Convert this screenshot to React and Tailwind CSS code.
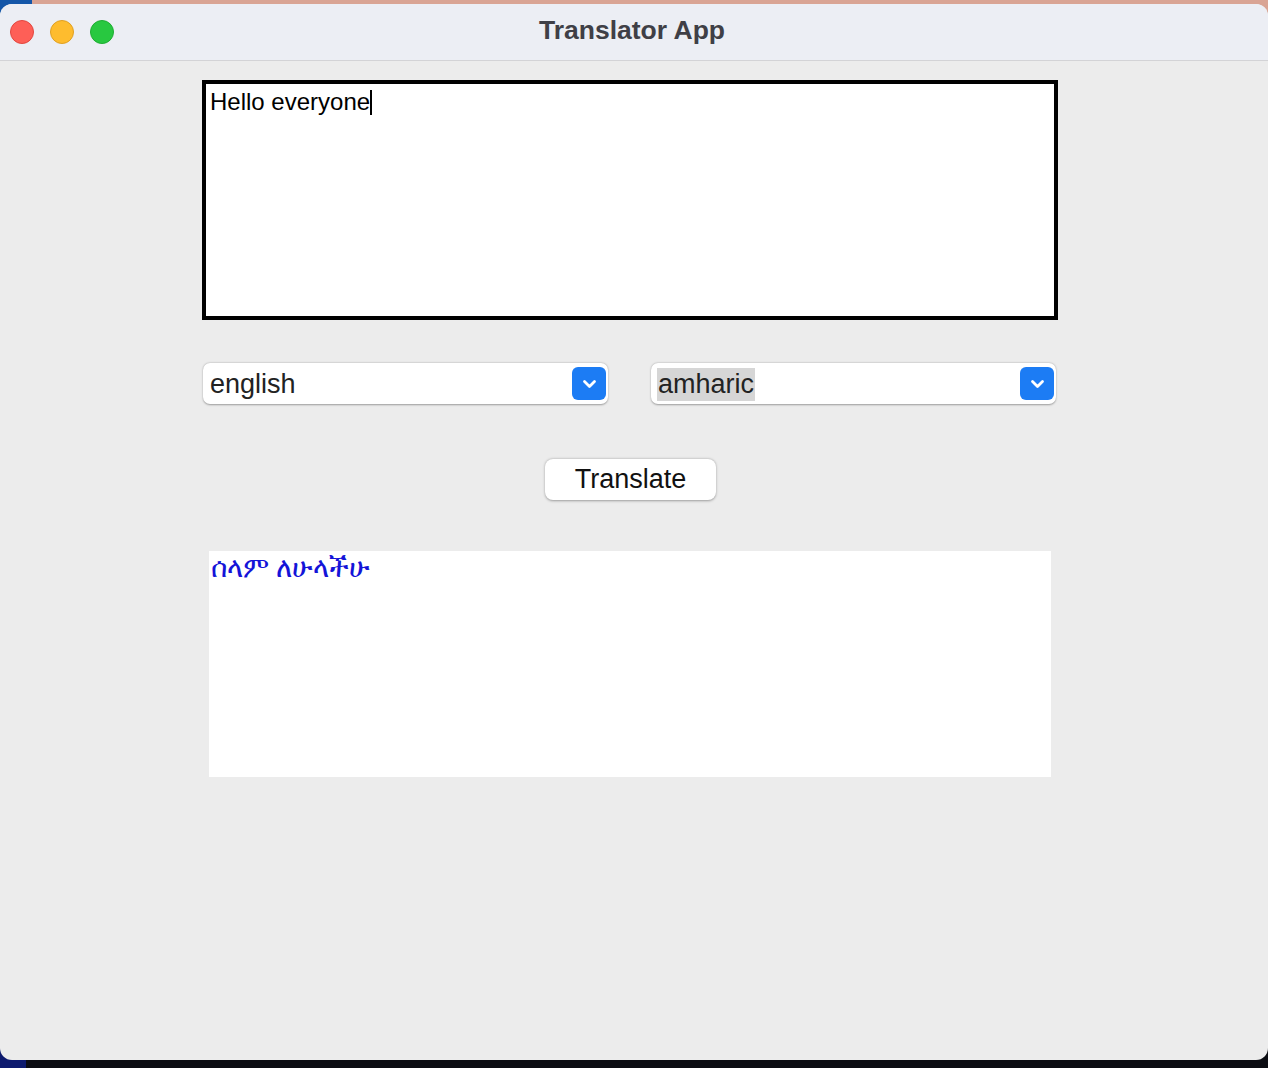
import React, { useState } from "react";

// small chevron used inside the blue select buttons
function Chevron() {
    return (
        <svg width="15" height="10" viewBox="0 0 15 10" fill="none">
            <path d="M2.5 2.5l5 5 5-5" stroke="white" strokeWidth="2.8" strokeLinecap="round" strokeLinejoin="round" />
        </svg>
    );
}

function LangSelect({ value, highlighted }) {
    return (
        <div className="flex items-center justify-between w-[405px] h-[41px] bg-white rounded-[7px] shadow-[0_0.5px_2px_rgba(0,0,0,0.35)] pl-[6px] pr-[2px]">
            <span className={"text-[27px] leading-[33px] text-[#222] px-[1px] mt-[2px] " + (highlighted ? "bg-[#d6d6d6]" : "")}>{value}</span>
            <div className="flex items-center justify-center w-[34px] h-[33px] rounded-[6px] bg-[#1c7cf4]">
                <Chevron />
            </div>
        </div>
    );
}

export default function App() {
    const [text] = useState("Hello everyone");

    return (
        <div className="relative w-[1268px] h-[1068px] overflow-hidden bg-[linear-gradient(to_bottom,#d9a494_0,#d9a494_40px,#0b0c12_40px)] font-['Liberation_Sans',Arial,sans-serif]">
            {/* wallpaper bits peeking at the corners */}
            <div className="absolute left-0 top-0 w-[32px] h-[30px] bg-[#1456a8] rounded-br-[10px]" />
            <div className="absolute left-0 bottom-0 w-[26px] h-[30px] bg-[#0d1a6e]" />

            <div className="relative mt-[4px] h-[1056px] rounded-[12px] overflow-hidden bg-[#ececec] flex flex-col">
                {/* title bar */}
                <div className="relative h-[57px] bg-[#eceef4] border-b border-[#d3d3d6] flex items-center justify-center">
                    <div className="absolute left-[10px] top-[16px] flex gap-[16px]">
                        <span className="w-[24px] h-[24px] rounded-full bg-[#fe5f57] border border-[#e2473f]" />
                        <span className="w-[24px] h-[24px] rounded-full bg-[#febc2e] border border-[#e0a023]" />
                        <span className="w-[24px] h-[24px] rounded-full bg-[#28c840] border border-[#1ead32]" />
                    </div>
                    <span className="text-[26.5px] font-bold text-[#3f3f46] ml-[-4px] mt-[-3px]">Translator App</span>
                </div>

                {/* content */}
                <div className="flex flex-col pl-[202px] pt-[19px]">
                    <div className="w-[856px] h-[240px] border-4 border-black bg-white px-[4px] pt-[4px]">
                        <span className="text-[24px] leading-[28px] text-black">{text}</span>
                        <span className="inline-block w-[2px] h-[25px] bg-black align-[-5px]" />
                    </div>

                    <div className="flex gap-[43px] mt-[43px] pl-[1px]">
                        <LangSelect value="english" />
                        <LangSelect value="amharic" highlighted />
                    </div>

                    <div className="flex w-[856px] justify-center mt-[55px] pl-[1px]">
                        <button className="w-[171px] h-[41px] rounded-[8px] bg-white shadow-[0_0.5px_2.5px_rgba(0,0,0,0.35)] text-[27px] text-[#111]">
                            Translate
                        </button>
                    </div>

                    <div className="ml-[6px] mt-[50px] w-[844px] h-[228px] bg-white border border-[#ececec] px-[2px] pt-[0px]">
                        <span className="text-[28px] leading-[30px] text-[#1414d8] font-medium font-['Noto_Sans','DejaVu_Sans',sans-serif]">ሰላም ለሁላችሁ</span>
                    </div>
                </div>
            </div>
        </div>
    );
}
